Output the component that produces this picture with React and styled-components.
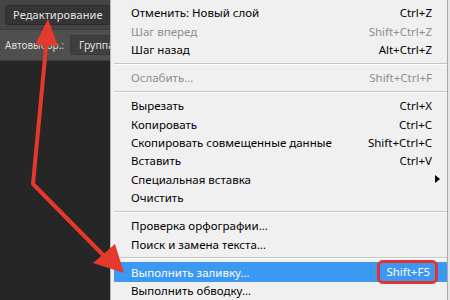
import React from "react";
import styled, { createGlobalStyle } from "styled-components";

const Global = createGlobalStyle`
  html, body { margin: 0; padding: 0; background: #1f1f1f; }
  body { width: 450px; height: 300px; overflow: hidden; }
`;

const Screen = styled.div`
  position: relative;
  display: flex;
  width: 450px;
  height: 300px;
  overflow: hidden;
  background: #e6e6e6;
  font-family: "Noto Sans", "Open Sans", sans-serif;
`;

const LeftPane = styled.div`
  width: 110px;
  flex: none;
  display: flex;
  flex-direction: column;
  background: #262626;
`;

const MenuBar = styled.div`
  height: 29px;
  display: flex;
  align-items: center;
  padding-left: 5px;
  background: #454545;
  border-bottom: 1px solid #3a3a3a;
`;

const MenuButton = styled.div`
  height: 18px;
  padding: 0 7px 0 7px;
  display: flex;
  align-items: center;
  background: #353535;
  border: 1px solid #2d2d2d;
  border-radius: 3px;
  color: #e4e4e4;
  font-size: 11px;
  letter-spacing: 0.1px;
  white-space: nowrap;
`;

const OptionsBar = styled.div`
  height: 30px;
  display: flex;
  align-items: center;
  gap: 6px;
  padding-left: 5px;
  background: #4f4f4f;
  border-bottom: 1px solid #3c3c3c;
  overflow: hidden;
`;

const OptionLabel = styled.span`
  color: #dcdcdc;
  font-size: 10px;
  white-space: nowrap;
`;

const OptionSelect = styled.div`
  height: 18px;
  padding: 0 8px;
  display: flex;
  align-items: center;
  background: #3f3f3f;
  border: 1px solid #3a3a3a;
  color: #e0e0e0;
  font-size: 10.5px;
  white-space: nowrap;
`;

const Canvas = styled.div`
  flex: 1;
  background: #262626;
`;

const Menu = styled.div`
  flex: 1;
  display: flex;
  flex-direction: column;
  padding: 3.8px 0 0 3px;
  background: #f0f0f0;
  border-left: 1px solid #b9b9b9;
  border-right: 1px solid #a9a9a9;
  margin-right: 2px;
`;

const Item = styled.div`
  height: ${(p) => (p.$active ? "20px" : "18.4px")};
  margin: ${(p) => (p.$active ? "-0.8px 0" : "0")};
  display: flex;
  align-items: center;
  justify-content: space-between;
  padding: 0 15px 0 17px;
  background: ${(p) => (p.$active ? "#3b98f3" : "transparent")};
  color: ${(p) => (p.$active ? "#ffffff" : p.$disabled ? "#8d8d8d" : "#000000")};
  font-size: 11.5px;
  white-space: nowrap;
`;

const Shortcut = styled.span`
  font-size: 11.5px;
`;

const Marked = styled.span`
  margin: -4px -6px -4px 0;
  padding: 1px 5px 2px 6px;
  border: 3px solid #e2342b;
  border-radius: 6px;
  font-size: 11.5px;
`;

const Arrowhead = styled.span`
  width: 0;
  height: 0;
  margin-right: -8px;
  border-top: 4px solid transparent;
  border-bottom: 4px solid transparent;
  border-left: 5px solid #000;
`;

const Separator = styled.div`
  height: 9.6px;
  display: flex;
  align-items: center;
  &::after {
    content: "";
    flex: 1;
    height: 1px;
    background: #c5c5c5;
    border-bottom: 1px solid #ffffff;
  }
`;

const Overlay = styled.svg`
  position: absolute;
  left: 0;
  top: 0;
  pointer-events: none;
`;

const items = [
  { label: "Отменить: Новый слой", key: "Ctrl+Z" },
  { label: "Шаг вперед", key: "Shift+Ctrl+Z", disabled: true },
  { label: "Шаг назад", key: "Alt+Ctrl+Z" },
  "sep",
  { label: "Ослабить...", key: "Shift+Ctrl+F", disabled: true },
  "sep",
  { label: "Вырезать", key: "Ctrl+X" },
  { label: "Копировать", key: "Ctrl+C" },
  { label: "Скопировать совмещенные данные", key: "Shift+Ctrl+C" },
  { label: "Вставить", key: "Ctrl+V" },
  { label: "Специальная вставка", submenu: true },
  { label: "Очистить" },
  "sep",
  { label: "Проверка орфографии..." },
  { label: "Поиск и замена текста..." },
  "sep",
  { label: "Выполнить заливку...", key: "Shift+F5", active: true },
  { label: "Выполнить обводку..." },
];

const App = () => (
  <Screen>
    <Global />
    <LeftPane>
      <MenuBar>
        <MenuButton>Редактирование</MenuButton>
      </MenuBar>
      <OptionsBar>
        <OptionLabel>Автовыбор.:</OptionLabel>
        <OptionSelect>Группа</OptionSelect>
      </OptionsBar>
      <Canvas />
    </LeftPane>
    <Menu>
      {items.map((it, i) =>
        it === "sep" ? (
          <Separator key={i} />
        ) : (
          <Item key={i} $disabled={it.disabled} $active={it.active}>
            <span>{it.label}</span>
            {it.submenu && <Arrowhead />}
            {it.key && (it.active ? <Marked>{it.key}</Marked> : <Shortcut>{it.key}</Shortcut>)}
          </Item>
        )
      )}
    </Menu>
    <Overlay width="450" height="300" viewBox="0 0 450 300">
      <polyline
        points="47,36 33,184 110,262"
        fill="none"
        stroke="#e4392d"
        strokeWidth="4"
        strokeLinejoin="round"
      />
      <polygon points="48,19 35,45 58,46" fill="#e4392d" />
      <polygon points="124,273 93,263 115,244" fill="#e4392d" />
    </Overlay>
  </Screen>
);

export default App;
